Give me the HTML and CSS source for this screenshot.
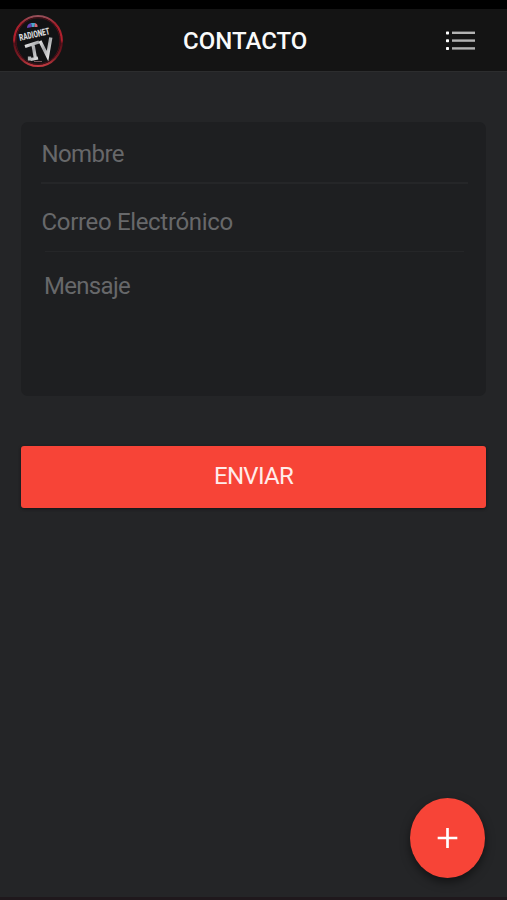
FILE: index.html
```html
<!DOCTYPE html>
<html lang="es">
<head>
<meta charset="utf-8">
<title>Contacto</title>
<link rel="stylesheet" href="styles.css">
</head>
<body>
<div class="status"></div>
<header class="bar">
  <svg class="logo" viewBox="0 0 52 54">
    <defs>
      <linearGradient id="ring" x1="0" y1="0" x2="0" y2="1">
        <stop offset="0" stop-color="#96505a"/><stop offset=".15" stop-color="#a3202c"/><stop offset=".48" stop-color="#b5202d"/><stop offset=".55" stop-color="#5c101a"/><stop offset=".82" stop-color="#7b1a22"/><stop offset="1" stop-color="#c23b42"/>
      </linearGradient>
      <linearGradient id="metal" x1="0" y1="0" x2="1" y2="1">
        <stop offset="0" stop-color="#f2f2f2"/><stop offset=".5" stop-color="#a5a7aa"/><stop offset="1" stop-color="#eeeeee"/>
      </linearGradient>
    </defs>
    <ellipse cx="26" cy="27" rx="23.8" ry="25" fill="#111214" stroke="url(#ring)" stroke-width="2.2"/>
    <ellipse cx="26" cy="27" rx="22" ry="23.2" fill="none" stroke="#4c1018" stroke-width="1"/>
    <path d="M15 14q0-4 4-5l1 4z" fill="#6a42b8"/>
    <path d="M19 9h4l-.5 4h-2.500z" fill="#49a7cd"/>
    <path d="M23 9q3 1 2.500 4h-3z" fill="#d96a75"/>
    <text class="logo-name" x="8" y="27" textLength="31" lengthAdjust="spacingAndGlyphs" transform="rotate(-13 8 27)">RADIONET</text>
    <path class="logo-tv" d="M13 32.500l14-4.500M21 30.500l2.500 14.500M18.500 45.500l7.500-1.500M17.500 42.500v4"/>
    <path class="logo-tv" d="M28 27l7.500 15 3.300-18.500"/>
    <path d="M22 47.500h8" stroke="#77565a" stroke-width="1"/>
  </svg>
  <h1 class="title">CONTACTO</h1>
  <svg class="menu" viewBox="0 0 31 22">
    <g fill="#fff"><rect x="1" y="1.400" width="3" height="3" rx=".7"/><rect x="1" y="9.200" width="3" height="3" rx=".7"/><rect x="1" y="17" width="3" height="3" rx=".7"/></g>
    <g fill="#b3b3b3"><rect x="7" y="1.600" width="23" height="2.400"/><rect x="7" y="9.400" width="23" height="2.400"/><rect x="7" y="17.200" width="23" height="2.400"/></g>
  </svg>
</header>
<main class="content">
  <form class="form">
    <section class="card">
      <div class="field name"><span>Nombre</span></div>
      <div class="field mail"><span>Correo Electrónico</span></div>
      <div class="message"><span>Mensaje</span></div>
    </section>
    <button class="send" type="button">ENVIAR</button>
  </form>
</main>
<button class="fab" type="button" aria-label="Agregar">
  <svg viewBox="0 0 22 22"><path d="M11 .5v21M.7 11h20.6" stroke="#fff" stroke-width="2.8"/></svg>
</button>
</body>
</html>
```
FILE: styles.css
```css
* { box-sizing: border-box; }
body {
  margin: 0;
  height: 900px;
  overflow: hidden;
  display: flex;
  flex-direction: column;
  background: #242527;
  border-bottom: 3px solid #1f181c;
  font-family: Roboto, "Liberation Sans", sans-serif;
}
.status { height: 9px; background: #000; }
.bar {
  height: 63px;
  display: grid;
  grid-template-columns: 52px 1fr 31px;
  align-items: center;
  padding: 0 31px 0 12px;
  background: #141414;
  border-bottom: 1px solid #2c2d2e;
}
.logo { width: 52px; height: 54px; margin-top: 2px; overflow: visible; }
.logo-name { font: 900 9.5px Roboto, sans-serif; fill: #d5d6d8; }
.logo-tv { fill: none; stroke: url(#metal); stroke-width: 3.3; }
.title {
  margin: 1px 0 0 119px;
  font-size: 24px;
  line-height: 28px;
  font-weight: 500;
  color: #fafafa;
}
.menu { width: 31px; height: 22px; margin-top: 1px; }
.content { padding: 50px 21px 0; }
.form { display: flex; flex-direction: column; gap: 50px; }
.card {
  height: 274px;
  padding: 0 18px 0 20px;
  border-radius: 7px;
  background: #1e1f21;
  color: #67686a;
  font-size: 24px;
  line-height: 28px;
}
.field { display: flex; align-items: center; border-bottom: 2px solid #252628; }
.name { height: 62px; padding-top: 3px; letter-spacing: -.6px; }
.mail { height: 68px; margin: 0 4px; border-bottom-width: 1px; padding-top: 8px; letter-spacing: -.33px; }
.name span { margin-left: .5px; }
.mail span { margin-left: -3.5px; }
.message { padding: 20px 3px 0; letter-spacing: -.7px; }
.send {
  height: 62px;
  padding: 0 0 2px;
  border: 0;
  border-radius: 3px;
  background: #f74437;
  box-shadow: 0 1px 3px #141516;
  color: #ffecea;
  font: 400 24px/28px Roboto, sans-serif;
  letter-spacing: -.7px;
}
.fab {
  position: absolute;
  left: 410px;
  top: 798px;
  width: 75px;
  height: 80px;
  display: grid;
  place-items: center;
  padding: 0;
  border: 0;
  border-radius: 50%;
  background: #f74437;
  box-shadow: 0 4px 10px rgba(0, 0, 0, .5);
}
.fab svg { width: 21px; height: 22px; }
```
